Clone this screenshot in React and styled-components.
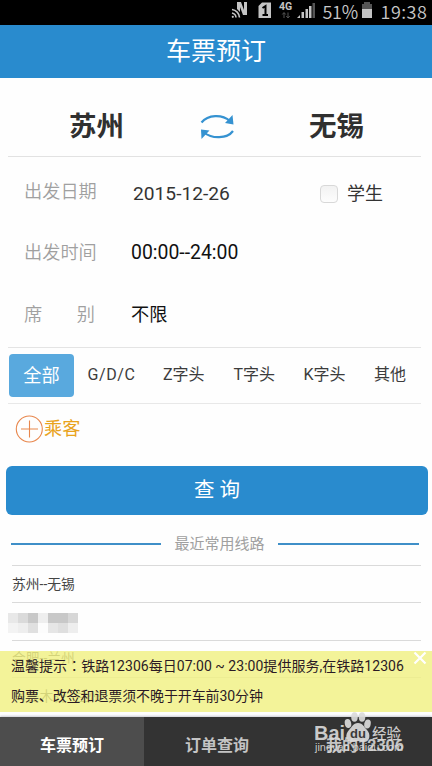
import React from "react";
import styled, { createGlobalStyle } from "styled-components";

const GlobalStyle = createGlobalStyle`
  * { box-sizing: border-box; }
  body {
    margin: 0;
    background: #fff;
    font-family: Roboto, "Noto Sans CJK SC", sans-serif;
    overflow: hidden;
  }
`;

const Screen = styled.div`
  display: flex;
  flex-direction: column;
  width: 432px;
  height: 766px;
  background: #fefefe;
  overflow: hidden;
`;

const StatusBar = styled.div`
  display: flex;
  flex: none;
  justify-content: flex-end;
  height: 25px;
  padding-right: 3px;
  background: #000;
  color: #c8c8c8;
  font: 350 18px/22px "Noto Sans CJK SC", sans-serif;
  white-space: nowrap;
`;

const StatusIcons = styled.svg`
  flex: none;
  width: 92px;
  height: 25px;
`;

const StatusText = styled.span`
  width: ${(p) => p.$w}px;
  letter-spacing: ${(p) => p.$ls || 0}px;
`;

const BatteryIcon = styled.svg`
  flex: none;
  width: 12px;
  height: 25px;
  margin-right: 8px;
`;

const Header = styled.header`
  flex: none;
  height: 53px;
  background: #298bce;
  color: #fff;
  font-size: 25px;
  line-height: 53px;
  text-align: center;
`;

const CityRow = styled.section`
  display: flex;
  flex: none;
  align-items: center;
  height: 79px;
  margin: 0 11px 0 8px;
  padding: 17px 0 0 61px;
  border-bottom: 1.5px solid #e2e2e2;
`;

const City = styled.div`
  width: 56px;
  padding-top: 3px;
  color: #303030;
  font-size: 27.5px;
  font-weight: 700;
  line-height: 40px;
  white-space: nowrap;
`;

const SwapIcon = styled.svg`
  width: 34px;
  height: 28px;
  margin: 2px 75px 0 75px;
`;

const Field = styled.div`
  display: flex;
  flex: none;
  align-items: center;
  height: ${(p) => p.$h}px;
  padding-top: ${(p) => p.$pt}px;
  padding-left: 24px;
  line-height: 28px;
`;

const FieldLabel = styled.div`
  display: flex;
  justify-content: space-between;
  width: ${(p) => p.$w || 73}px;
  margin-right: ${(p) => p.$gap || 34}px;
  margin-top: ${(p) => p.$mt || 0}px;
  color: #a0a0a0;
  font-size: 18.2px;
  font-weight: 350;
  white-space: nowrap;
`;

const FieldValue = styled.div`
  width: 187px;
  color: ${(p) => p.$color || "#111"};
  font-size: ${(p) => p.$size || 19.4}px;
`;

const Student = styled.label`
  display: flex;
  align-items: center;
  gap: 9px;
  color: #333;
  font-size: 18px;
`;

const Checkbox = styled.span`
  width: 18px;
  height: 18px;
  border: 1px solid #d8d8d8;
  border-radius: 4px;
  background: linear-gradient(#f2f2f2, #fdfdfd);
`;

const TrainTypes = styled.nav`
  display: flex;
  flex: none;
  align-items: center;
  height: 57px;
  margin: 0 11px 0 8px;
  padding-left: 1px;
  border-top: 1.5px solid #e4e4e4;
  border-bottom: 1.5px solid #e8e8e8;
  color: #3c3c3c;
  font-size: 16px;
`;

const TrainType = styled.span`
  width: ${(p) => p.$w}px;
  white-space: nowrap;
  line-height: 26px;
  margin-top: -2px;
  letter-spacing: ${(p) => p.$ls || 0}px;
`;

const ActiveType = styled.span`
  width: 65px;
  height: 43px;
  margin-right: 13.5px;
  border-radius: 4px;
  background: #59a9de;
  color: #fff;
  font-size: 18.2px;
  line-height: 44px;
  text-align: center;
`;

const Passenger = styled.div`
  display: flex;
  flex: none;
  align-items: center;
  height: 50px;
  padding-left: 15px;
  gap: 1px;
  color: #e9a31d;
  font-size: 18.2px;
  line-height: 28px;
`;

const PlusIcon = styled.svg`
  width: 28px;
  height: 28px;
`;

const QueryButton = styled.button`
  flex: none;
  height: 48.5px;
  margin: 12px 4px 0 6px;
  padding: 0 0 4px;
  border: 0;
  border-radius: 6px;
  background: #298bce;
  color: #fff;
  font: 400 20.5px Roboto, "Noto Sans CJK SC", sans-serif;
`;

const SectionTitle = styled.div`
  display: flex;
  flex: none;
  align-items: center;
  height: 50.5px;
  padding: 8px 13px 0 11px;
  color: #a0a0a0;
  font-size: 15px;
  line-height: 22px;
`;

const SectionLine = styled.span`
  flex: 0 0 ${(p) => p.$w}px;
  height: 1.6px;
  margin-top: 1px;
  background: #3f8fc8;
`;

const SectionText = styled.span`
  width: 118px;
  text-align: center;
  white-space: nowrap;
`;

const RouteList = styled.section`
  position: relative;
  flex: none;
  height: 147px;
`;

const Route = styled.div`
  display: flex;
  align-items: center;
  height: 37.3px;
  margin: 0 11px 0 12px;
  padding-bottom: 1px;
  border-top: 1px solid #dadada;
  color: #444;
  font-size: 13.8px;
  line-height: 20px;
`;

const Mosaic = styled.div`
  display: grid;
  grid-template-columns: repeat(7, 10px);
  grid-auto-rows: 10px;
  margin: 4px 0 0 -4px;
`;

const MosaicCell = styled.span`
  background: ${(p) => p.$c};
`;

const Notice = styled.aside`
  position: absolute;
  left: 0;
  right: 0;
  top: 86px;
  height: 61px;
  background: rgba(241, 241, 132, 0.83);
  color: #2b1a25;
  font-size: 14px;
  line-height: 30px;
  white-space: nowrap;
`;

const NoticeLine = styled.div`
  padding-left: 11px;
  letter-spacing: ${(p) => p.$ls}px;
`;

const CenteredColon = styled.span`
  font-family: "Noto Sans CJK TC", sans-serif;
  line-height: 1;
`;

const CloseIcon = styled.svg`
  position: absolute;
  right: 5px;
  top: 0;
  width: 14px;
  height: 14px;
`;

const TabBar = styled.footer`
  position: relative;
  display: grid;
  flex: none;
  grid-template-columns: repeat(3, 1fr);
  height: 49px;
  margin-top: 5px;
  background: #333;
  box-shadow: 0 -1px 2px #c9cbd2;
`;

const Tab = styled.div`
  padding-top: 4px;
  padding-left: ${(p) => p.$pl || 0}px;
  background: ${(p) => (p.$active ? "#4d4d4d" : "#333")};
  color: ${(p) => (p.$active ? "#fff" : "#c4c4c4")};
  font-size: 16px;
  font-weight: 700;
  line-height: 49px;
  text-align: center;
`;

const Watermark = styled.div`
  position: absolute;
  left: 315px;
  top: -7px;
  width: 92px;
  height: 46px;
  color: rgba(218, 218, 218, 0.92);
  font-family: "Liberation Sans", "Noto Sans CJK SC", sans-serif;
`;

const WatermarkLogo = styled.svg`
  display: block;
  width: 92px;
  height: 46px;
  overflow: visible;
`;

const mosaic = [
  "#e8e8e8", "#dadada", "#c8c8c8", "#eeeeee", "#c8c8c8", "#c8c8c8", "#d7d7d7",
  "#f3f3f3", "#eeeeee", "#e0e0e0", "#fcfcfc", "#e6e6e6", "#dfdfdf", "#eeeeee",
];

export default function App() {
  return (
    <>
      <GlobalStyle />
      <Screen>
        <StatusBar>
          <StatusIcons viewBox="0 0 92 25" fill="#c4c4c4">
            <path d="M6 2h4l3 8V2h3v13h-4L9 7v5l-3-3z" />
            <path d="M1 9.500a8.500 8.500 0 0 1 7.500 8M1 13a5 5 0 0 1 4 4.500" fill="none" stroke="#c4c4c4" strokeWidth="1.6" />
            <circle cx="1.8" cy="16.8" r="1.1" />
            <path d="M31 2.500h9v15.500H27.500V6z" />
            <path d="M31.500 8l3-2v9M31.500 15h5.500" fill="none" stroke="#000" strokeWidth="2" />
            <text x="48" y="9.500" fontFamily="Roboto" fontSize="10.5" fontWeight="700">4G</text>
            <path d="M53 18v-5M51.3 14.5l1.7-2 1.7 2M57 12.500v5M55.300 16l1.700 2 1.700-2" fill="none" stroke="#555" />
            <path d="M67 17l2-2v3h-3zM70.500 12h2.500v6h-2.500zM74.500 9h2.500v9h-2.500zM78 6h2.500v12H78z" />
            <path d="M81.500 3H84v15h-2.500z" fill="#555" />
          </StatusIcons>
          <StatusText $w={38} $ls={-0.3}>51%</StatusText>
          <BatteryIcon viewBox="0 0 12 25">
            <path d="M3 2h6v2h2v5H1V4h2z" fill="#555" />
            <path d="M1 9h10v9H1z" fill="#c4c4c4" />
          </BatteryIcon>
          <StatusText $w={48.5} $ls={0.5}>19:38</StatusText>
        </StatusBar>
        <Header>车票预订</Header>
        <CityRow>
          <City>苏州</City>
          <SwapIcon viewBox="0 0 34 28" fill="none" stroke="#3592d1" strokeWidth="2.2">
            <path d="M1.500 9.500C8 1.500 22 1 30 8" />
            <path d="M32.500 2l1 9.500-8.500-1.500z" fill="#3592d1" stroke="none" />
            <path d="M33 18C27 26 12 26 4 19.500" />
            <path d="M1.500 26L1 16.500l8.500 1z" fill="#3592d1" stroke="none" />
          </SwapIcon>
          <City>无锡</City>
        </CityRow>
        <Field $h={64} $pt={9}>
          <FieldLabel $gap={36} $mt={-4}>出发日期</FieldLabel>
          <FieldValue $color="#333" $size={19.2}>2015-12-26</FieldValue>
          <Student><Checkbox />学生</Student>
        </Field>
        <Field $h={62} $pt={1}>
          <FieldLabel>出发时间</FieldLabel>
          <FieldValue>00:00--24:00</FieldValue>
        </Field>
        <Field $h={64} $pt={0}>
          <FieldLabel $w={71} $gap={36}><span>席</span><span>别</span></FieldLabel>
          <FieldValue $size={18.2}>不限</FieldValue>
        </Field>
        <TrainTypes>
          <ActiveType>全部</ActiveType>
          <TrainType $w={75.5} $ls={0.6}>G/D/C</TrainType>
          <TrainType $w={70.5}>Z字头</TrainType>
          <TrainType $w={70}>T字头</TrainType>
          <TrainType $w={70.5}>K字头</TrainType>
          <TrainType $w={40}>其他</TrainType>
        </TrainTypes>
        <Passenger>
          <PlusIcon viewBox="0 0 28 28" fill="none" stroke="#e8874d" strokeWidth="1.1">
            <circle cx="14.300" cy="14" r="13" />
            <path d="M6 14h17M14.500 5.500v17" />
          </PlusIcon>
          乘客
        </Passenger>
        <QueryButton>查 询</QueryButton>
        <SectionTitle>
          <SectionLine $w={150} />
          <SectionText>最近常用线路</SectionText>
          <SectionLine $w={141} />
        </SectionTitle>
        <RouteList>
          <Route>苏州--无锡</Route>
          <Route>
            <Mosaic>{mosaic.map((c, i) => <MosaicCell key={i} $c={c} />)}</Mosaic>
          </Route>
          <Route>合肥--兰州</Route>
          <Route>乌鲁木齐--兰州</Route>
          <Notice>
            <NoticeLine $ls={0.03}>温馨提示<CenteredColon>：</CenteredColon>铁路12306每日07:00 ~ 23:00提供服务,在铁路12306</NoticeLine>
            <NoticeLine $ls={-0.1}>购票、改签和退票须不晚于开车前30分钟</NoticeLine>
            <CloseIcon viewBox="0 0 14 14" stroke="#fff" strokeWidth="2.200">
              <path d="M1.500 1.500l11 11M12.500 1.500l-11 11" />
            </CloseIcon>
          </Notice>
        </RouteList>
        <TabBar>
          <Tab $active>车票预订</Tab>
          <Tab $pl={2}>订单查询</Tab>
          <Tab $pl={10}>我的12306</Tab>
          <Watermark>
            <WatermarkLogo viewBox="0 0 92 46" fill="currentColor">
              <text x="-1" y="30" fontSize="21" fontWeight="700" textLength="31" lengthAdjust="spacingAndGlyphs">Bai</text>
              <ellipse cx="33" cy="13.500" rx="3.200" ry="4.500" transform="rotate(-12 33 13.500)" />
              <ellipse cx="39.500" cy="7" rx="3.300" ry="4.800" />
              <ellipse cx="47" cy="7" rx="3.300" ry="4.800" />
              <ellipse cx="52.500" cy="14" rx="3.200" ry="4.500" transform="rotate(12 52.500 14)" />
              <path d="M43 13c5 0 6 4 9 7 4 4 3 12-3 12-3 0-3-1-6-1s-3 1-6 1c-7 0-7-8-3-12 3-3 4-7 9-7z" />
              <text x="35" y="28" fontSize="13" fontWeight="700" fill="#3a3a3a">du</text>
              <text x="57" y="29" fontSize="14.500" fontWeight="500">经验</text>
              <text x="0" y="41" fontSize="11.500" textLength="88" lengthAdjust="spacingAndGlyphs">jingyan.baidu.com</text>
            </WatermarkLogo>
          </Watermark>
        </TabBar>
      </Screen>
    </>
  );
}
